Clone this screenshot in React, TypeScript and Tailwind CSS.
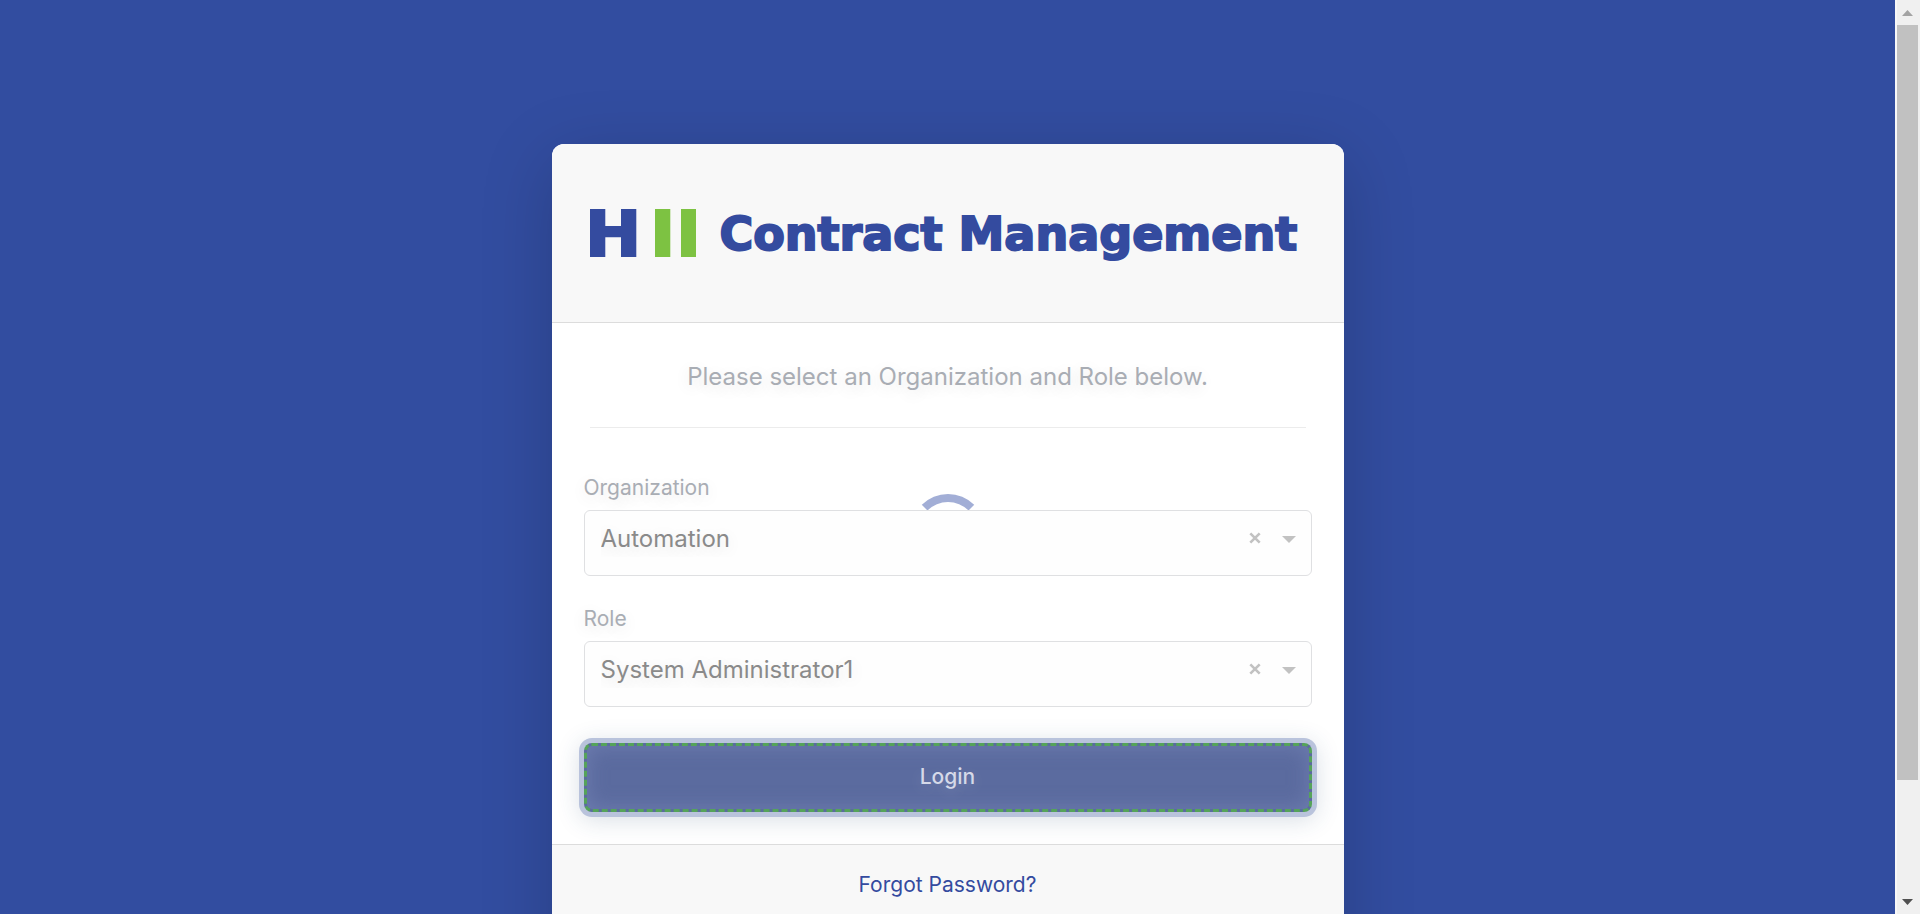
import React from "react";

type FieldProps = { id: string; label: string; value: string };

function SelectField({ id, label, value }: FieldProps) {
  return (
    <div className="flex flex-col">
      <label
        htmlFor={id}
        className="mb-2 text-[21px] leading-7 text-[#a9adb4] [text-shadow:0_4px_16px_rgba(0,0,0,0.12)]"
      >
        {label}
      </label>
      <div className="relative">
        <select
          id={id}
          defaultValue={value}
          className="block h-[66px] w-full appearance-none rounded-md border border-[#dfe0e2] bg-[#fefefe] pr-24 pb-2 pl-4 text-[24px] text-[#8a8a8a] outline-none [text-shadow:0_4px_16px_rgba(0,0,0,0.12)]"
        >
          <option value={value}>{value}</option>
        </select>
        <button
          type="button"
          aria-label={`Clear ${label}`}
          className="absolute top-[22px] right-[51px] flex h-3 w-3 items-center justify-center text-[#c2c2c2]"
        >
          <svg viewBox="0 0 12 12" className="h-3 w-3" fill="none" stroke="currentColor" strokeWidth="2.6">
            <path d="M1.300 1.300 10.700 10.700M10.700 1.300 1.300 10.700" />
          </svg>
        </button>
        <svg
          viewBox="0 0 14 7"
          className="pointer-events-none absolute top-[26px] right-4 h-[7px] w-[14px]"
          fill="#c2c2c2"
          aria-hidden="true"
        >
          <path d="M0 0h14L7 7z" />
        </svg>
      </div>
    </div>
  );
}

function Logo() {
  return (
    <svg viewBox="0 0 106 48" className="h-12 w-[106px] shrink-0" aria-hidden="true">
      <path fill="#344b9f" d="M0 0h15.3v17H31V0h15.3v48H31V28.3H15.3V48H0z" />
      <path fill="#7dc242" d="M65 0h15.3v48H65zM91 0h15v48H91z" />
    </svg>
  );
}

function ScrollRail() {
  return (
    <div className="flex w-[25px] shrink-0 flex-col items-center border-l-2 border-[#f8f8f8] bg-[#f0f0f0] pr-[2px]" aria-hidden="true">
      <div className="flex h-[25px] items-center">
        <svg viewBox="0 0 11 6" className="h-[6px] w-[11px]" fill="#a3a3a3">
          <path d="M0 6h11L5.500 0z" />
        </svg>
      </div>
      <div className="w-full flex-[755] bg-[#c1c1c1]" />
      <div className="flex-[109]" />
      <div className="flex h-[25px] items-center">
        <svg viewBox="0 0 11 6" className="h-[6px] w-[11px]" fill="#505050">
          <path d="M0 0h11L5.500 6z" />
        </svg>
      </div>
    </div>
  );
}

export default function App() {
  return (
    <div className="flex h-screen overflow-hidden bg-[#324da0] font-['Inter',sans-serif]">
      <main className="flex min-w-0 flex-1 items-start justify-center overflow-hidden pt-36">
        <section className="w-full max-w-[792px] overflow-hidden rounded-xl bg-white shadow-[0_16px_72px_rgba(0,0,0,0.18)]">
          <header className="flex h-[179px] items-center gap-6 border-b border-[#dcdcdc] bg-[#f8f8f8] pr-8 pl-[38px]">
            <Logo />
            <h1 className="pt-0.5 font-['DejaVu_Sans',sans-serif] text-[46px] leading-none font-bold whitespace-nowrap text-[#344b9f] [-webkit-text-stroke:2px_#344b9f]">
              Contract Management
            </h1>
          </header>

          <form className="relative px-8 pb-8" onSubmit={(e) => e.preventDefault()}>
            <p className="mx-1.5 border-b border-[#ececec] pt-9 pb-8 text-center text-[24px] leading-9 text-[#a9adb4] [text-shadow:0_4px_16px_rgba(0,0,0,0.12)]">
              Please select an Organization and Role below.
            </p>

            <div
              role="status"
              aria-label="Loading"
              className="absolute top-[171px] left-1/2 h-[74px] w-[74px] -translate-x-1/2 rounded-full border-8 border-transparent border-t-[#a2aed6]"
            />

            <div className="mt-[46px] flex flex-col gap-[29px]">
              <SelectField id="organization" label="Organization" value="Automation" />
              <SelectField id="role" label="Role" value="System Administrator1" />
            </div>

            <button
              type="submit"
              className="mt-9 block h-[69px] w-full rounded-lg border-[3px] border-dashed border-[#55a35a] bg-[#5b6b9f] pb-0.5 text-[21px] font-medium text-[#d5d9e8] shadow-[0_0_0_5px_#b9c3dc,0_4px_24px_4px_rgba(40,70,110,0.18),inset_0_0_20px_rgba(125,140,190,0.55)] [text-shadow:0_4px_14px_rgba(255,255,255,0.2)]"
            >
              Login
            </button>
          </form>

          <footer className="flex h-[130px] justify-center border-t border-[#dcdcdc] bg-[#f8f8f8] pt-6">
            <a href="#forgot-password" className="text-[21px] leading-8 text-[#344b9f]">
              Forgot Password?
            </a>
          </footer>
        </section>
      </main>
      <ScrollRail />
    </div>
  );
}
